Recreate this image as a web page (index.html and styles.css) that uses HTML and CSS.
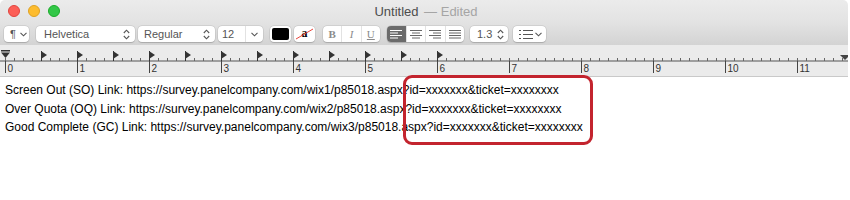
FILE: index.html
```html
<!DOCTYPE html>
<html lang="en">
<head>
    <meta charset="UTF-8">
    <title>Untitled — Edited</title>
    <link rel="stylesheet" href="styles.css">
</head>
<body>
    <div class="window">
        <div class="titlebar">
            <div class="lights">
                <span class="light red"></span>
                <span class="light yellow"></span>
                <span class="light green"></span>
            </div>
            <div class="title">Untitled <span class="edited">— Edited</span></div>
        </div>

        <div class="toolbar">
            <div class="ctl para">
                <span class="pilcrow">¶</span>
                <svg class="chev" width="7" height="5" viewBox="0 0 7 5"><path d="M0.5 0.8 L3.5 3.8 L6.5 0.8" fill="none" stroke="#555" stroke-width="1.1"/></svg>
            </div>
            <div class="ctl font">
                <span>Helvetica</span>
                <svg class="updown" width="7" height="11" viewBox="0 0 7 11"><path d="M0.8 4 L3.5 1.2 L6.2 4 M0.8 7 L3.5 9.8 L6.2 7" fill="none" stroke="#555" stroke-width="1.1"/></svg>
            </div>
            <div class="ctl weight">
                <span>Regular</span>
                <svg class="updown" width="7" height="11" viewBox="0 0 7 11"><path d="M0.8 4 L3.5 1.2 L6.2 4 M0.8 7 L3.5 9.8 L6.2 7" fill="none" stroke="#555" stroke-width="1.1"/></svg>
            </div>
            <div class="ctl size">
                <span class="size-val">12</span>
                <span class="size-btn">
                    <svg width="7" height="5" viewBox="0 0 7 5"><path d="M0.5 0.8 L3.5 3.8 L6.5 0.8" fill="none" stroke="#555" stroke-width="1.1"/></svg>
                </span>
            </div>
            <div class="ctl well">
                <span class="swatch"></span>
            </div>
            <div class="ctl well well2">
                <span class="letter-a">a</span>
                <svg class="strike" width="19" height="12" viewBox="0 0 19 12"><path d="M1 11 L18 1" stroke="#e8453c" stroke-width="1"/></svg>
            </div>
            <div class="ctl seg biu">
                <span class="seg-item b">B</span>
                <span class="seg-item i">I</span>
                <span class="seg-item u">U</span>
            </div>
            <div class="ctl seg align">
                <span class="seg-item on">
                    <svg width="12" height="9" viewBox="0 0 12 9"><path d="M0 0.5h12M0 3h8M0 5.5h12M0 8h8" stroke="#fff" stroke-width="1"/></svg>
                </span>
                <span class="seg-item">
                    <svg width="12" height="9" viewBox="0 0 12 9"><path d="M0 0.5h12M2 3h8M0 5.5h12M2 8h8" stroke="#666" stroke-width="1"/></svg>
                </span>
                <span class="seg-item">
                    <svg width="12" height="9" viewBox="0 0 12 9"><path d="M0 0.5h12M4 3h8M0 5.5h12M4 8h8" stroke="#666" stroke-width="1"/></svg>
                </span>
                <span class="seg-item">
                    <svg width="12" height="9" viewBox="0 0 12 9"><path d="M0 0.5h12M0 3h12M0 5.5h12M0 8h12" stroke="#666" stroke-width="1"/></svg>
                </span>
            </div>
            <div class="ctl spacing">
                <span>1.3</span>
                <svg class="updown" width="7" height="11" viewBox="0 0 7 11"><path d="M0.8 4 L3.5 1.2 L6.2 4 M0.8 7 L3.5 9.8 L6.2 7" fill="none" stroke="#555" stroke-width="1.1"/></svg>
            </div>
            <div class="ctl list">
                <svg width="14" height="9" viewBox="0 0 14 9"><path d="M0 0.5h2M0 4.5h2M0 8.5h2M4 0.5h10M4 4.5h10M4 8.5h10" stroke="#555" stroke-width="1"/></svg>
                <svg class="chev" width="7" height="5" viewBox="0 0 7 5"><path d="M0.5 0.8 L3.5 3.8 L6.5 0.8" fill="none" stroke="#555" stroke-width="1.1"/></svg>
            </div>
        </div>

        <div class="ruler">
            <svg width="850" height="32" viewBox="0 0 850 32">
                <defs>
                    <pattern id="minor" x="5" y="0" width="9" height="32" patternUnits="userSpaceOnUse">
                        <rect x="0" y="13" width="1" height="3" fill="#666"/>
                    </pattern>
                    <pattern id="inch" x="5" y="0" width="72" height="32" patternUnits="userSpaceOnUse">
                        <rect x="0" y="16" width="1" height="12" fill="#444"/>
                    </pattern>
                    <pattern id="tabs" x="41" y="0" width="36" height="32" patternUnits="userSpaceOnUse">
                        <path d="M0 6 L6 10 L0 14 Z" fill="#333"/>
                        <rect x="0" y="6" width="1" height="10" fill="#333"/>
                    </pattern>
                </defs>
                <rect x="0" y="15.5" width="850" height="1" fill="#555"/>
                <rect x="5" y="0" width="845" height="32" fill="url(#minor)"/>
                <rect x="5" y="0" width="845" height="32" fill="url(#inch)"/>
                <rect x="41" y="0" width="403" height="32" fill="url(#tabs)"/>
                <rect x="1" y="5" width="9" height="1.5" fill="#333"/>
                <path d="M1 7.5 L10 7.5 L5.5 13 Z" fill="#333"/>
                <path d="M840 10 L850 10 L845 15 Z" fill="#444"/>
                <g class="nums">
                    <text x="7.5" y="27">0</text>
                    <text x="79.5" y="27">1</text>
                    <text x="151.5" y="27">2</text>
                    <text x="223.5" y="27">3</text>
                    <text x="295.5" y="27">4</text>
                    <text x="367.5" y="27">5</text>
                    <text x="439.5" y="27">6</text>
                    <text x="511.5" y="27">7</text>
                    <text x="583.5" y="27">8</text>
                    <text x="655.5" y="27">9</text>
                    <text x="727.5" y="27">10</text>
                    <text x="799.5" y="27">11</text>
                </g>
            </svg>
        </div>

        <div class="doc">
            <p>Screen Out (SO) Link: https://survey.panelcompany.com/wix1/p85018.aspx?id=xxxxxxx&amp;ticket=xxxxxxxx</p>
            <p>Over Quota (OQ) Link: https://survey.panelcompany.com/wix2/p85018.aspx?id=xxxxxxx&amp;ticket=xxxxxxxx</p>
            <p>Good Complete (GC) Link: https://survey.panelcompany.com/wix3/p85018.aspx?id=xxxxxxx&amp;ticket=xxxxxxxx</p>
            <div class="highlight"></div>
        </div>
    </div>
</body>
</html>
```

FILE: styles.css
```css
body {
    margin: 0;
    width: 850px;
    height: 200px;
    overflow: hidden;
    background-color: #fff;
    font-family: "Liberation Sans", Arial, sans-serif;
}

.window {
    width: 848px;
    height: 200px;
    position: relative;
    background-color: #fff;
    border-radius: 5px 5px 0 0;
    overflow: hidden;
}

.titlebar {
    height: 22px;
    position: relative;
    background: linear-gradient(#ebebeb, #e3e3e3);
}

.lights {
    display: flex;
    gap: 8px;
    padding: 5px 0 0 8px;
}

.light {
    width: 12px;
    height: 12px;
    border-radius: 50%;
    box-sizing: border-box;
}

.red {
    background-color: #fc5f57;
    border: 0.5px solid #e0443e;
}

.yellow {
    background-color: #fdbc2e;
    border: 0.5px solid #dea123;
}

.green {
    background-color: #33c748;
    border: 0.5px solid #1aab29;
}

.title {
    position: absolute;
    top: 4px;
    left: 0;
    right: 0;
    text-align: center;
    font-size: 13px;
    color: #4d4d4d;
    padding-left: 4px;
}

.edited {
    color: #a5a5a5;
    margin-left: 2px;
}

.toolbar {
    height: 24px;
    display: flex;
    align-items: flex-start;
    padding: 4px 0 0 4px;
    box-sizing: border-box;
    background: linear-gradient(#e3e3e3, #d3d3d3);
    border-bottom: 1px solid #b4b4b4;
}

.ctl {
    height: 16px;
    box-sizing: border-box;
    background-color: #fff;
    border-radius: 4px;
    box-shadow: 0 0 0 0.5px rgba(0, 0, 0, 0.12), 0 0.5px 1px rgba(0, 0, 0, 0.15);
    display: flex;
    align-items: center;
    font-size: 11px;
    color: #555;
}

.para {
    width: 25px;
    padding-left: 6px;
    gap: 4px;
}

.pilcrow {
    font-size: 11px;
    color: #555;
}

.font {
    width: 99px;
    margin-left: 7px;
    padding: 0 5px 0 8px;
    justify-content: space-between;
}

.weight {
    width: 77px;
    margin-left: 3px;
    padding: 0 5px 0 6px;
    justify-content: space-between;
}

.size {
    width: 45px;
    margin-left: 3px;
}

.size-val {
    width: 27px;
    padding-left: 4px;
    box-sizing: border-box;
}

.size-btn {
    flex: 1;
    height: 16px;
    border-left: 1px solid #e2e2e2;
    display: flex;
    align-items: center;
    justify-content: center;
}

.well {
    width: 21px;
    margin-left: 7px;
    padding: 2px 2px;
}

.swatch {
    display: block;
    width: 100%;
    height: 100%;
    background-color: #000;
    border-radius: 2px;
}

.well2 {
    margin-left: 3px;
    position: relative;
    justify-content: center;
    padding: 0;
}

.letter-a {
    font-family: "Liberation Serif", serif;
    font-weight: bold;
    font-size: 12px;
    color: #000;
    line-height: 1;
    margin-top: -2px;
}

.strike {
    position: absolute;
    left: 1px;
    top: 2px;
}

.seg {
    padding: 0;
}

.seg-item {
    flex: 1;
    height: 16px;
    display: flex;
    align-items: center;
    justify-content: center;
    border-left: 1px solid #e2e2e2;
}

.seg-item:first-child {
    border-left: none;
}

.biu {
    width: 57px;
    margin-left: 8px;
}

.biu .seg-item {
    font-family: "Liberation Serif", serif;
    font-size: 11px;
    color: #8a8a8a;
}

.b {
    font-weight: bold;
}

.i {
    font-style: italic;
}

.u {
    text-decoration: underline;
}

.align {
    width: 77px;
    margin-left: 7px;
    overflow: hidden;
}

.align .on {
    background-color: #6b6b6b;
}

.spacing {
    width: 38px;
    margin-left: 6px;
    padding: 0 4px 0 7px;
    justify-content: space-between;
}

.list {
    width: 33px;
    margin-left: 5px;
    padding: 0 4px 0 6px;
    justify-content: space-between;
}

.ruler {
    height: 31px;
    background-color: #ebebeb;
    border-bottom: 1px solid #c9c9c9;
}

.ruler svg {
    display: block;
    margin-top: -1px;
}

.nums text {
    font-family: "Liberation Sans", Arial, sans-serif;
    font-size: 10px;
    fill: #333;
}

.doc {
    position: relative;
    padding: 4px 0 0 5px;
}

.doc p {
    margin: 0;
    font-size: 12px;
    line-height: 18.5px;
    color: #000;
    white-space: nowrap;
}

.highlight {
    position: absolute;
    left: 403px;
    top: -2px;
    width: 190px;
    height: 70px;
    box-sizing: border-box;
    border: 3px solid #c3242e;
    border-radius: 9px;
}
```
